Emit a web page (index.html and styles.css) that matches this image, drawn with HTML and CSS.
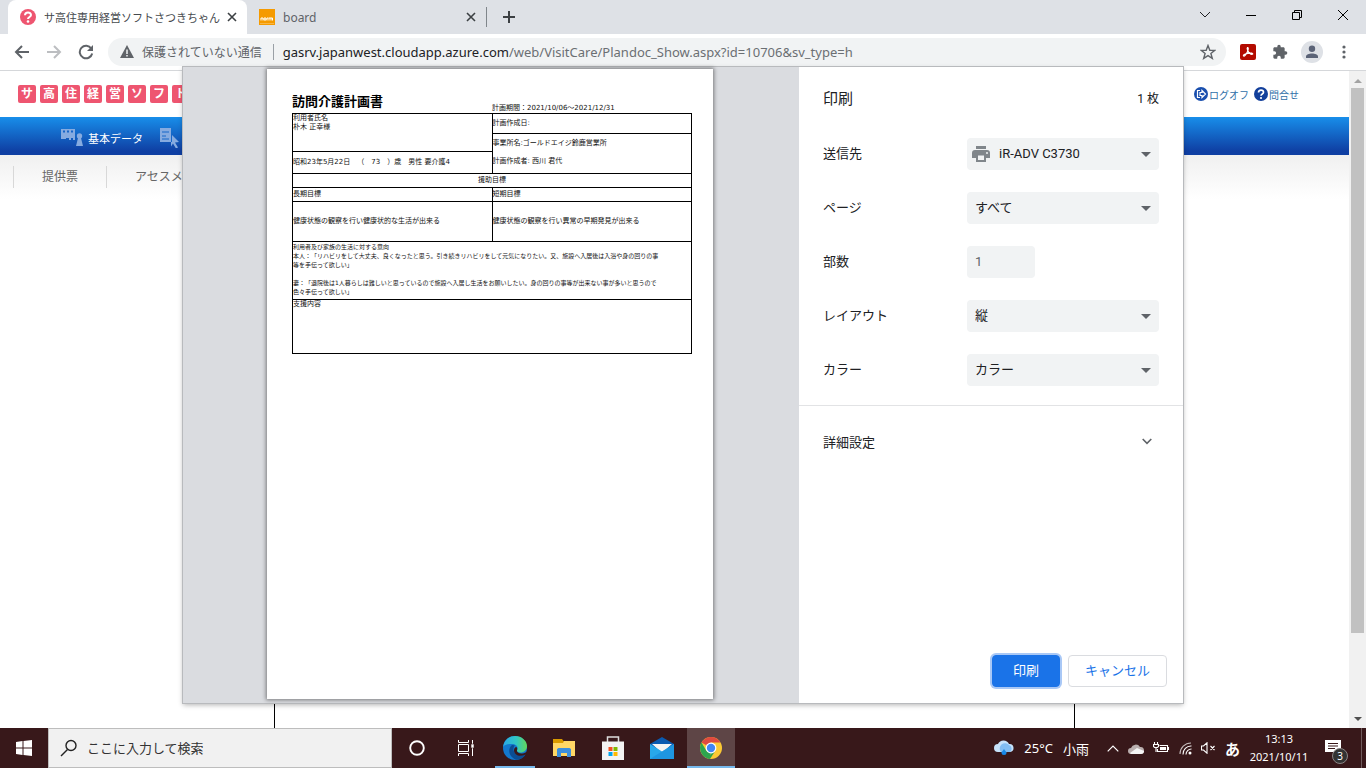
FILE: index.html
```html
<!DOCTYPE html>
<html lang="ja">
<head>
    <meta charset="UTF-8">
    <meta name="viewport" content="width=device-width, initial-scale=1.0">
    <title>サ高住専用経営ソフトさつきちゃん</title>
    <link rel="stylesheet" href="styles.css">
</head>
<body>
    <!-- Tab strip -->
    <div class="tabstrip">
        <div class="tab active">
            <svg class="favicon" viewBox="0 0 16 16"><circle cx="8" cy="8" r="8" fill="#ee5570"/><path d="M5 6.300C5 2.500 11 2.700 11 6c0 2-3 2-3 4" fill="none" stroke="#fff" stroke-width="2"/><circle cx="8" cy="12.500" r="1.300" fill="#fff"/></svg>
            <span class="tab-title">サ高住専用経営ソフトさつきちゃん</span>
            <button class="tab-close" aria-label="タブを閉じる"><svg width="10" height="10" viewBox="0 0 10 10"><path d="M1 1l8 8M9 1L1 9" stroke="#3c4043" stroke-width="1.600"/></svg></button>
        </div>
        <div class="tab">
            <svg class="favicon" viewBox="0 0 16 16"><path fill="#f59a00" d="M0 0h16v16H0z"/><path d="M2 11.500V9h2v2.500M5 9h2v2H5zM8 11.500V9h1.500M10 11.500V9h3.500v2.500M12 9v2.500" fill="none" stroke="#fff"/><path d="M1 14.500h14" stroke="#fbd38b" stroke-width=".5"/></svg>
            <span class="tab-title">board</span>
            <button class="tab-close" aria-label="タブを閉じる"><svg width="10" height="10" viewBox="0 0 10 10"><path d="M1 1l8 8M9 1L1 9" stroke="#3c4043" stroke-width="1.600"/></svg></button>
        </div>
        <button class="new-tab" aria-label="新しいタブ"><svg width="12" height="12" viewBox="0 0 12 12"><path d="M6 0v12M0 6h12" stroke="#3c4043" stroke-width="2"/></svg></button>
        <div class="window-controls">
            <button aria-label="タブを検索"><svg width="12" height="12" viewBox="0 0 12 12"><path d="M1 3l5 5 5-5" fill="none" stroke="#202124"/></svg></button>
            <button aria-label="最小化"><svg width="10" height="10" viewBox="0 0 10 10"><path d="M0 5.500h10" stroke="#000"/></svg></button>
            <button aria-label="元に戻す"><svg width="10" height="10" viewBox="0 0 10 10"><path d="M.5 2.500h7v7h-7zM2.500 2.500v-2h7v7h-2" fill="none" stroke="#000"/></svg></button>
            <button aria-label="閉じる"><svg width="10" height="10" viewBox="0 0 10 10"><path d="M0 0l10 10M10 0L0 10" stroke="#000"/></svg></button>
        </div>
    </div>

    <!-- Address bar -->
    <div class="toolbar">
        <div class="nav-buttons">
            <button aria-label="戻る"><svg width="16" height="16" viewBox="0 0 16 16"><path d="M15 8H2M8 2L2 8l6 6" fill="none" stroke="#5f6368" stroke-width="2"/></svg></button>
            <button aria-label="進む"><svg width="16" height="16" viewBox="0 0 16 16"><path d="M1 8h13M8 2l6 6-6 6" fill="none" stroke="#bcbec1" stroke-width="2"/></svg></button>
            <button aria-label="再読み込み"><svg width="16" height="16" viewBox="0 0 16 16"><path d="M13.300 4.500A6.300 6.300 0 1 0 14.200 9.500" fill="none" stroke="#5f6368" stroke-width="2"/><path d="M15 1v6H9z" fill="#5f6368"/></svg></button>
        </div>
        <div class="omnibox">
            <svg width="14" height="14" viewBox="0 0 14 14"><path d="M7 0l7 13H0z" fill="#5f6368"/><path d="M7 4.500v4.500M7 10v1.500" stroke="#f1f3f4" stroke-width="1.500"/></svg>
            <span class="insecure">保護されていない通信</span>
            <span class="url"><b>gasrv.japanwest.cloudapp.azure.com</b>/web/VisitCare/Plandoc_Show.aspx?id=10706&amp;sv_type=h</span>
            <button aria-label="ブックマーク"><svg width="16" height="16" viewBox="0 0 16 16"><path d="M8 1.500l1.800 4.700 5 .2-3.900 3.100 1.400 4.900L8 11.600l-4.300 2.800 1.400-4.900-3.900-3.100 5-.2z" fill="none" stroke="#5f6368" stroke-width="1.400"/></svg></button>
        </div>
        <div class="extensions">
            <button aria-label="PDF"><svg width="16" height="16" viewBox="0 0 16 16"><rect width="16" height="16" rx="2" fill="#b30b00"/><path d="M3.500 12c-1-1.500 5-3.500 8.500-2.800 2 .8-.5 1.800-2 .3C8 8 6.500 4.500 7.500 3.500c1.500-.3.700 4-2 7.500-.7 1-1.600 1.500-2 1z" fill="none" stroke="#fff" stroke-width="1.200"/></svg></button>
            <button aria-label="拡張機能"><svg width="16" height="16" viewBox="0 0 24 24"><path fill="#5f6368" d="M20.500 11H19V7c0-1.100-.9-2-2-2h-4V3.500a2.500 2.500 0 0 0-5 0V5H4c-1.100 0-2 .9-2 2v3.800h1.500a2.700 2.700 0 0 1 0 5.400H2V20c0 1.100.9 2 2 2h3.800v-1.500a2.700 2.700 0 0 1 5.400 0V22H17c1.100 0 2-.9 2-2v-4h1.500a2.500 2.500 0 0 0 0-5z"/></svg></button>
            <button aria-label="プロフィール"><svg width="22" height="22" viewBox="0 0 22 22"><circle cx="11" cy="11" r="11" fill="#dee1e6"/><circle cx="11" cy="7.800" r="3.200" fill="#5b6377"/><path d="M5 17v-1.500c0-4 12-4 12 0V17z" fill="#5b6377"/></svg></button>
            <button aria-label="メニュー"><svg width="4" height="14" viewBox="0 0 4 14"><g fill="#5f6368"><circle cx="2" cy="2" r="1.600"/><circle cx="2" cy="7" r="1.600"/><circle cx="2" cy="12" r="1.600"/></g></svg></button>
        </div>
    </div>

    <!-- Page behind the dialog -->
    <div class="viewport">
        <div class="page">
            <div class="page-header">
                <div class="logo"><span>サ</span><span>高</span><span>住</span><span>経</span><span>営</span><span>ソ</span><span>フ</span><span>ト</span></div>
                <div class="page-links">
                    <a href="#"><svg width="14" height="14" viewBox="0 0 14 14"><circle cx="7" cy="7" r="7" fill="#1a4fae"/><path d="M6 3.500H3.500v7H6M6 5.500h2v-2L11.500 7 8 10.500v-2H6z" fill="none" stroke="#fff" stroke-width="1.200"/></svg>ログオフ</a>
                    <a href="#"><svg width="14" height="14" viewBox="0 0 14 14"><circle cx="7" cy="7" r="7" fill="#123f9b"/><path d="M4.500 5.500c0-3.300 5-3.100 5-.2C9.500 7 7 7 7 8.800" fill="none" stroke="#fff" stroke-width="1.700"/><circle cx="7" cy="11" r="1.100" fill="#fff"/></svg>問合せ</a>
                </div>
            </div>
            <div class="main-menu">
                <a href="#"><svg width="22" height="18" viewBox="0 0 22 18"><g fill="#86abe0"><path d="M0 0h14v11h-2V9h-2v2H8V9H5v1H0z"/><circle cx="18.500" cy="7" r="2.700"/><path d="M17 9h3l2 8h-7z"/></g><path d="M2 2.500h2M6 2.500h2M10 2.500h2" stroke="#1766c8" stroke-width="2"/></svg>基本データ</a>
                <a href="#"><svg width="20" height="20" viewBox="0 0 20 20"><path fill="#86abe0" d="M0 0h11v6l8 8-4 .5 3 5-2 1-3-5-2 3V14H0z"/><path d="M2 4h7M2 8h4M2 11h7M11.500 6v8" fill="none" stroke="#1766c8"/></svg>アセスメント</a>
            </div>
            <div class="sub-menu">
                <a href="#">提供票</a>
                <a href="#">アセスメント</a>
            </div>
            <div class="page-sheet"></div>
        </div>
        <div class="scrollbar">
            <svg width="8" height="5" viewBox="0 0 8 5"><path d="M0 5l4-4 4 4z" fill="#a3a3a3"/></svg>
            <div class="thumb"></div>
            <svg width="8" height="5" viewBox="0 0 8 5"><path d="M0 0l4 4 4-4z" fill="#505050"/></svg>
        </div>
    </div>

    <!-- Print dialog -->
    <div class="overlay">
        <div class="dialog" role="dialog" aria-labelledby="dialogTitle">
            <div class="preview">
                <div class="paper">
                    <div class="paper-head">
                        <h1>訪問介護計画書</h1>
                        <p>計画期間：2021/10/06～2021/12/31</p>
                    </div>
                    <table class="plan">
                        <tr class="row-date">
                            <td rowspan="2" class="top">利用者氏名<br>朴木 正幸様</td>
                            <td>計画作成日:</td>
                        </tr>
                        <tr class="row-name">
                            <td rowspan="2" class="office">事業所名:ゴールドエイジ鈴鹿営業所<br>計画作成者: 西川 君代</td>
                        </tr>
                        <tr class="row-birth">
                            <td>昭和23年5月22日　（　73　）歳　男性 要介護4</td>
                        </tr>
                        <tr class="row-label">
                            <td colspan="2" class="center">援助目標</td>
                        </tr>
                        <tr class="row-label">
                            <td>長期目標</td>
                            <td>短期目標</td>
                        </tr>
                        <tr class="row-goal">
                            <td>健康状態の観察を行い健康状的な生活が出来る</td>
                            <td>健康状態の観察を行い異常の早期発見が出来る</td>
                        </tr>
                        <tr class="row-wish">
                            <td colspan="2" class="wish">利用者及び家族の生活に対する意向<br>本人：「リハビリをして大丈夫、良くなったと思う。引き続きリハビリをして元気になりたい。又、施設へ入居後は入浴や身の回りの事<br>等を手伝って欲しい」<br><br>妻：「退院後は1人暮らしは難しいと思っているので施設へ入居し生活をお願いしたい。身の回りの事等が出来ない事が多いと思うので<br>色々手伝って欲しい」</td>
                        </tr>
                        <tr class="row-support">
                            <td colspan="2" class="top">支援内容</td>
                        </tr>
                    </table>
                </div>
            </div>

            <form class="settings">
                <div class="settings-head">
                    <h2 id="dialogTitle">印刷</h2>
                    <span>1 枚</span>
                </div>
                <div class="field">
                    <label for="printer">送信先</label>
                    <div class="select-box with-icon">
                        <svg class="printer-icon" width="18" height="16" viewBox="0 0 18 16"><path fill="#80868b" d="M4 0h10v3H4zM3 4h12a3 3 0 0 1 3 3v5h-4v4H4v-4H0V7a3 3 0 0 1 3-3z"/><path fill="#f1f3f4" d="M6 9.500h6V14H6z"/><circle cx="15" cy="7" r="1" fill="#f1f3f4"/></svg>
                        <select id="printer"><option>iR-ADV C3730</option></select>
                        <svg class="arrow" width="10" height="5" viewBox="0 0 10 5"><path d="M0 0h10L5 5z" fill="#5f6368"/></svg>
                    </div>
                </div>
                <div class="field">
                    <label for="pages">ページ</label>
                    <div class="select-box">
                        <select id="pages"><option>すべて</option></select>
                        <svg class="arrow" width="10" height="5" viewBox="0 0 10 5"><path d="M0 0h10L5 5z" fill="#5f6368"/></svg>
                    </div>
                </div>
                <div class="field">
                    <label for="copies">部数</label>
                    <input type="text" id="copies" value="1">
                </div>
                <div class="field">
                    <label for="layout">レイアウト</label>
                    <div class="select-box">
                        <select id="layout"><option>縦</option></select>
                        <svg class="arrow" width="10" height="5" viewBox="0 0 10 5"><path d="M0 0h10L5 5z" fill="#5f6368"/></svg>
                    </div>
                </div>
                <div class="field">
                    <label for="color">カラー</label>
                    <div class="select-box">
                        <select id="color"><option>カラー</option></select>
                        <svg class="arrow" width="10" height="5" viewBox="0 0 10 5"><path d="M0 0h10L5 5z" fill="#5f6368"/></svg>
                    </div>
                </div>
                <button type="button" class="more">詳細設定<svg width="10" height="7" viewBox="0 0 10 7"><path d="M.7 1L5 5.300 9.300 1" fill="none" stroke="#5f6368" stroke-width="1.600"/></svg></button>
                <div class="actions">
                    <button type="button" class="btn btn-primary">印刷</button>
                    <button type="button" class="btn">キャンセル</button>
                </div>
            </form>
        </div>
    </div>

    <!-- Taskbar -->
    <div class="taskbar">
        <button class="start" aria-label="スタート"><svg width="16" height="16" viewBox="0 0 16 16"><path fill="#fff" d="M0 2l6.500-1v6.500H0zM7.500 1L16 0v7.500H7.500zM0 8.500h6.500V15L0 14zM7.500 8.500H16V16l-8.500-1z"/></svg></button>
        <label class="search">
            <svg width="18" height="18" viewBox="0 0 18 18"><circle cx="11" cy="6.500" r="5" fill="none" stroke="#222" stroke-width="1.400"/><path d="M7.500 10.500L1 17" stroke="#222" stroke-width="1.400"/></svg>
            <input type="text" aria-label="検索" placeholder="ここに入力して検索">
        </label>
        <div class="apps">
            <button aria-label="Cortana"><svg width="16" height="16" viewBox="0 0 16 16"><circle cx="8" cy="8" r="6.800" fill="none" stroke="#fff" stroke-width="1.900"/></svg></button>
            <button aria-label="タスクビュー"><svg width="18" height="16" viewBox="0 0 18 16"><path d="M1.500 4.500h10v7h-10zM1.500 0v2.500h10V0M1.500 16v-2.500h10V16M15.500 0v16" fill="none" stroke="#fff"/><path d="M14 4h3v4h-3z" fill="#fff" stroke="#38181a" stroke-width=".6"/></svg></button>
            <button class="running" aria-label="Edge"><svg width="24" height="24" viewBox="0 0 24 24">
                <defs><linearGradient id="edgeTop" x1="0" x2="1"><stop offset="0" stop-color="#2aa7e8"/><stop offset=".55" stop-color="#31c6c4"/><stop offset="1" stop-color="#62d75a"/></linearGradient></defs>
                <circle cx="12" cy="12" r="12" fill="#1378ce"/>
                <path d="M0 11C1 4 6 0 12 0c7 0 12 5 12 10 0 4-3 6.500-6.500 6.500-3 0-4-1.500-3.500-2.500 2-3-1-6-5-6-4.500 0-8 1-9 3z" fill="url(#edgeTop)"/>
                <path d="M9 9c-5 4-3 12 4 14.700C19 24 22 20 22.500 18c-5 2.500-11 1-12-4-.3-2 .5-4 1.500-4.500C11 9 10 8.700 9 9z" fill="#0b4d94"/>
                <path d="M13.500 11c2 3-1 3 1.500 5.500 2 1.500 5 1.500 9-.8v2l-2 1c-5 2.500-11 .5-11-4.500 0-1.500 1-3 2.500-3.200z" fill="#38181a"/></svg></button>
            <button aria-label="エクスプローラー"><svg width="22" height="18" viewBox="0 0 22 18"><path d="M0 0h9l1.500 2H22v3H0z" fill="#d99a00"/><path d="M0 4h10l1-2h11v15H0z" fill="#ffd766"/><path d="M4 18v-8l1.500-1h11l1.500 1v8h-4v-4H8v4z" fill="#3c8fdd"/></svg></button>
            <button aria-label="ストア"><svg width="24" height="24" viewBox="0 0 24 24"><path d="M6.500 6V1h11v5" fill="none" stroke="#ddd" stroke-width="1.500"/><path d="M1 5.500h22V24H1z" fill="#f3f3f3"/><path fill="#f25022" d="M7.500 11h4v4h-4z"/><path fill="#7fba00" d="M12.500 11h4v4h-4z"/><path fill="#00a4ef" d="M7.500 16h4v4h-4z"/><path fill="#ffb900" d="M12.500 16h4v4h-4z"/></svg></button>
            <button aria-label="メール"><svg width="24" height="22" viewBox="0 0 24 22"><path d="M0 7l12-7 12 7v8H0z" fill="#0a5ab0"/><path d="M2 7h20l-10 9z" fill="#f4f4f4"/><path d="M0 7l12 7.500L24 7v15H0z" fill="#28a8ea"/><path d="M0 22l24-15v15z" fill="#1484d8" opacity=".5"/></svg></button>
            <button class="running current" aria-label="Chrome"><svg width="22" height="22" viewBox="0 0 22 22"><circle cx="11" cy="11" r="11" fill="#fbc934"/><path d="M11 11L1.500 5.500A11 11 0 0 1 20.500 5.500H11z" fill="#e04a3f"/><path d="M1.500 5.500l5 8.500 4.500 2-2 5.800A11 11 0 0 1 1.500 5.500z" fill="#2da44e"/><path d="M15.500 13.500L10 22l-2-.4L11.500 16z" fill="#2da44e"/><circle cx="11" cy="11" r="5.400" fill="#fff"/><circle cx="11" cy="11" r="4.200" fill="#4285f4"/></svg></button>
        </div>
        <div class="tray">
            <div class="weather">
                <svg width="20" height="16" viewBox="0 0 20 16"><path d="M4 12a4 4 0 0 1 0-8 6 6 0 0 1 11 0 4 4 0 0 1 1 8z" fill="#c6e2fa"/><path d="M7 12a5 5 0 0 1 8-7 4 4 0 0 1 1 7z" fill="#82bdf2"/><path d="M10 9l2.500 3.500a2.500 2.500 0 1 1-5 0z" fill="#1688e8"/></svg>
                <span>25°C</span><span>小雨</span>
            </div>
            <div class="status">
                <svg width="12" height="7" viewBox="0 0 12 7"><path d="M.7 6.300L6 1l5.300 5.300" fill="none" stroke="#fff" stroke-width="1.200"/></svg>
                <svg width="16" height="11" viewBox="0 0 16 11"><path d="M3 11a3 3 0 0 1 0-6 5 5 0 0 1 9-1 3.500 3.500 0 0 1 1 7z" fill="#b9aeae"/><path d="M2 10l7-5 7 3c0 2-1 3-3 3H3z" fill="#f4f4f4"/></svg>
                <svg width="17" height="12" viewBox="0 0 17 12"><path d="M6.500 3.500h8v6h-10V7M15.500 5v3M1.500 0v2M4.500 0v2M.5 2.500h5v2l-1 1h-3l-1-1zM3 6v4" fill="none" stroke="#fff" stroke-width="1.100"/><path d="M7 5h6v3H7z" fill="#fff"/></svg>
                <svg width="13" height="13" viewBox="0 0 13 13"><g fill="none" stroke="#fff" stroke-width="1.100"><path d="M1 12A11 11 0 0 1 12 1" opacity=".7"/><path d="M4 12.500A8 8 0 0 1 12.500 4M7 12.500A5.500 5.500 0 0 1 12.500 7"/></g><circle cx="11" cy="11" r="1.500" fill="#fff"/></svg>
                <svg width="15" height="12" viewBox="0 0 15 12"><path d="M.5 4h2L6 .8v10.400L2.500 8h-2zM9.500 4l4 4M13.500 4l-4 4" fill="none" stroke="#fff" stroke-width="1.100"/></svg>
                <span class="ime">あ</span>
            </div>
            <div class="clock">13:13<br>2021/10/11</div>
            <button class="notifications" aria-label="通知">
                <svg width="16" height="16" viewBox="0 0 16 16"><path d="M0 0h16v12h-4v4l-4-4H0z" fill="#fff"/><path d="M3 3.500h10M3 6h10M3 8.500h7" stroke="#38181a"/></svg>
                <span class="badge">3</span>
            </button>
        </div>
    </div>
</body>
</html>
```
FILE: styles.css
```css
* {
    margin: 0;
    padding: 0;
    box-sizing: border-box;
}

body {
    height: 100vh;
    display: flex;
    flex-direction: column;
    position: relative;
    overflow: hidden;
    background: #fff;
    font-family: 'Noto Sans', 'Noto Sans CJK JP', sans-serif;
    font-size: 12px;
    color: #202124;
}

button {
    background: none;
    border: none;
    font: inherit;
    color: inherit;
    display: flex;
    align-items: center;
    justify-content: center;
    cursor: pointer;
}

input, select {
    font: inherit;
    color: inherit;
    border: none;
    outline: none;
}

a {
    text-decoration: none;
}

svg {
    flex-shrink: 0;
    display: block;
}

/* Tab strip */
.tabstrip {
    height: 34px;
    display: flex;
    background: #dee1e6;
    padding-left: 8px;
}

.tab {
    width: 239px;
    display: flex;
    align-items: center;
    padding: 0 9px 0 12px;
    color: #5f6368;
    border-radius: 8px 8px 0 0;
}

.tab.active {
    background: #fff;
    color: #45494d;
    font-size: 11px;
}

.favicon {
    width: 16px;
    height: 16px;
    margin-right: 8px;
}

.tab-title {
    flex: 1;
    white-space: nowrap;
    overflow: hidden;
}

.tab-close {
    width: 12px;
    height: 16px;
}

.new-tab {
    width: 46px;
    position: relative;
}

.new-tab::before {
    content: '';
    position: absolute;
    left: 0;
    top: 7px;
    height: 20px;
    border-left: 1px solid #80868b;
}

.window-controls {
    display: flex;
    margin-left: auto;
}

.window-controls button {
    width: 46px;
    height: 29px;
}

/* Address bar */
.toolbar {
    height: 37px;
    display: flex;
    align-items: center;
    border-bottom: 1px solid #d5d7da;
    padding: 0 6px;
}

.nav-buttons, .extensions {
    display: flex;
}

.nav-buttons button, .extensions button {
    width: 32px;
    height: 28px;
}

.nav-buttons {
    margin-right: 6px;
}

.extensions {
    margin-left: 6px;
}

.omnibox {
    flex: 1;
    min-width: 0;
    height: 28px;
    display: flex;
    align-items: center;
    background: #f1f3f4;
    border-radius: 14px;
    padding: 0 10px 0 12px;
}

.insecure {
    color: #5f6368;
    white-space: nowrap;
    margin: 0 11px 0 8px;
}

.url {
    flex: 1;
    font-size: 13px;
    line-height: 16px;
    white-space: nowrap;
    overflow: hidden;
    color: #6b6f73;
    border-left: 1px solid #9aa0a6;
    padding-left: 9px;
}

.url b {
    font-weight: normal;
    color: #202124;
}

/* Page behind the dialog */
.viewport {
    flex: 1;
    min-height: 0;
    display: flex;
}

.page {
    flex: 1;
    min-width: 0;
    display: flex;
    flex-direction: column;
}

.page-header {
    height: 46px;
    display: flex;
    align-items: center;
    justify-content: space-between;
    padding: 0 50px 0 18px;
}

.logo {
    display: flex;
    gap: 4px;
}

.logo span {
    width: 18px;
    height: 18px;
    border-radius: 2px;
    background: #ee5570;
    color: #fff;
    font-size: 12px;
    font-weight: bold;
    line-height: 18px;
    text-align: center;
}

.page-links {
    display: flex;
    gap: 5px;
    font-size: 10px;
}

.page-links a {
    display: flex;
    align-items: center;
    gap: 1px;
    color: #2f6fa8;
}

.main-menu {
    height: 38px;
    display: flex;
    align-items: center;
    gap: 17px;
    padding: 4px 0 0 61px;
    background: linear-gradient(#188eea, #0f3fa3 90%);
    font-size: 11px;
}

.main-menu a {
    display: flex;
    align-items: center;
    gap: 5px;
    color: #fff;
}

.sub-menu {
    height: 44px;
    display: flex;
    align-items: center;
    padding-left: 13px;
    background: linear-gradient(#f0f0f0, #fff);
}

.sub-menu a {
    line-height: 22px;
    padding: 0 28px;
    border-left: 1px solid #d8d8d8;
    color: #666;
}

.page-sheet {
    flex: 1;
    width: 801px;
    margin: 0 auto;
    border: solid #000;
    border-width: 0 1px;
}

.scrollbar {
    width: 17px;
    display: flex;
    flex-direction: column;
    align-items: center;
    background: #f1f1f1;
    padding: 7px 0 6px;
}

.thumb {
    width: 13px;
    height: 545px;
    margin: 5px 0 auto;
    background: #c1c1c1;
}

/* Print dialog */
.overlay {
    position: absolute;
    top: 67px;
    bottom: 65px;
    left: 0;
    right: 0;
    display: flex;
    justify-content: center;
}

.dialog {
    width: 100%;
    max-width: 1000px;
    display: flex;
    background: #fff;
    box-shadow: 0 0 0 1px #b8babd, 0 2px 5px rgba(0,0,0,0.3);
}

.preview {
    flex: 1;
    display: flex;
    justify-content: center;
    padding: 2px 2px 4px 0;
    background: #dadce0;
}

.paper {
    aspect-ratio: 446 / 630;
    background: #fff;
    padding: 23px 21px 0 25px;
    box-shadow: 0 0 4px 1px rgba(0,0,0,0.45);
    font-family: 'DejaVu Sans', 'Noto Sans CJK JP', sans-serif;
    font-size: 7px;
    text-spacing-trim: space-all;
    color: #111;
}

.paper-head {
    display: grid;
    grid-template-columns: 1fr 1fr;
    align-items: end;
}

.paper-head h1 {
    font-size: 13px;
    line-height: 19px;
    padding-bottom: 2px;
    color: #000;
}

.paper-head p {
    line-height: 10px;
}

.plan {
    width: 100%;
    table-layout: fixed;
    border-collapse: collapse;
    line-height: 9px;
}

.plan td {
    border: 1px solid #000;
    white-space: nowrap;
}

.plan .top {
    vertical-align: top;
}

.plan .center {
    text-align: center;
}

.plan .office {
    line-height: 18px;
    vertical-align: top;
}

.plan .wish {
    font-size: 6px;
    vertical-align: top;
}

.row-date {
    height: 20px;
}

.row-name {
    height: 18px;
}

.row-birth {
    height: 22px;
}

.row-label {
    height: 14px;
}

.row-goal {
    height: 40px;
}

.row-wish {
    height: 58px;
}

.row-support {
    height: 54px;
}

.settings {
    width: 384px;
    display: flex;
    flex-direction: column;
    font-family: Roboto, 'Noto Sans CJK JP', sans-serif;
    font-size: 13px;
}

.settings-head {
    height: 60px;
    display: flex;
    align-items: center;
    justify-content: space-between;
    padding: 0 24px;
    font-size: 12px;
}

.settings-head h2 {
    font-size: 15px;
    font-weight: normal;
}

.field {
    height: 54px;
    display: flex;
    align-items: center;
    padding: 0 24px;
}

.field label {
    width: 144px;
    padding-bottom: 3px;
}

.select-box {
    flex: 1;
    position: relative;
}

.field select, .field input {
    height: 32px;
    padding: 0 8px 2px;
    background: #f1f3f4;
    border-radius: 4px;
}

.field select {
    width: 100%;
    appearance: none;
}

.field input {
    width: 68px;
    color: #5f6368;
}

.with-icon select {
    padding-left: 32px;
}

.printer-icon {
    position: absolute;
    left: 5px;
    top: 8px;
}

.arrow {
    position: absolute;
    right: 8px;
    top: 14px;
    pointer-events: none;
}

.more {
    height: 72px;
    justify-content: space-between;
    margin-top: 8px;
    padding: 0 31px 0 24px;
    border-top: 1px solid #e2e3e5;
}

.actions {
    display: flex;
    justify-content: flex-end;
    gap: 8px;
    margin-top: auto;
    padding: 16px;
}

.btn {
    height: 32px;
    padding: 0 16px 3px;
    border: 1px solid #dadce0;
    border-radius: 4px;
    color: #1a73e8;
}

.btn-primary {
    padding: 0 20px 3px;
    background: #1a73e8;
    border-color: #1a73e8;
    color: #fff;
    box-shadow: 0 0 0 2px #a9c8f6;
}

/* Taskbar */
.taskbar {
    height: 40px;
    display: flex;
    background: #38181a;
    color: #fff;
}

.start {
    width: 48px;
}

.search {
    width: 344px;
    display: flex;
    align-items: center;
    gap: 9px;
    padding: 0 11px;
    background: #f1f1f1;
    border: 1px solid #bdbdbd;
}

.search input {
    flex: 1;
    min-width: 0;
    background: none;
    font-size: 13px;
}

.search input::placeholder {
    color: #333;
    opacity: 1;
}

.apps {
    display: flex;
    gap: 1px;
    margin-left: 1px;
}

.apps button {
    width: 48px;
    position: relative;
}

.running::after {
    content: '';
    position: absolute;
    bottom: 0;
    left: 4px;
    right: 4px;
    height: 2px;
    background: #76b9ed;
}

.current {
    background: #5e4546;
}

.current::after {
    left: 0;
    right: 0;
}

.tray {
    display: flex;
    align-items: center;
    margin-left: auto;
    padding-right: 4px;
}

.weather {
    display: flex;
    align-items: center;
    gap: 10px;
    font-size: 13px;
    margin-right: 18px;
}

.status {
    display: flex;
    align-items: center;
    gap: 9px;
}

.ime {
    font-size: 15px;
    font-weight: bold;
}

.clock {
    width: 78px;
    font-size: 11px;
    line-height: 18px;
    text-align: center;
}

.notifications {
    height: 40px;
    width: 44px;
    position: relative;
    padding-right: 14px;
    border-right: 1px solid #705b5c;
}

.badge {
    position: absolute;
    left: 14px;
    top: 20px;
    width: 16px;
    height: 16px;
    border: 1px solid #8b8585;
    border-radius: 50%;
    background: #333;
    font-size: 10px;
    line-height: 14px;
}
```
